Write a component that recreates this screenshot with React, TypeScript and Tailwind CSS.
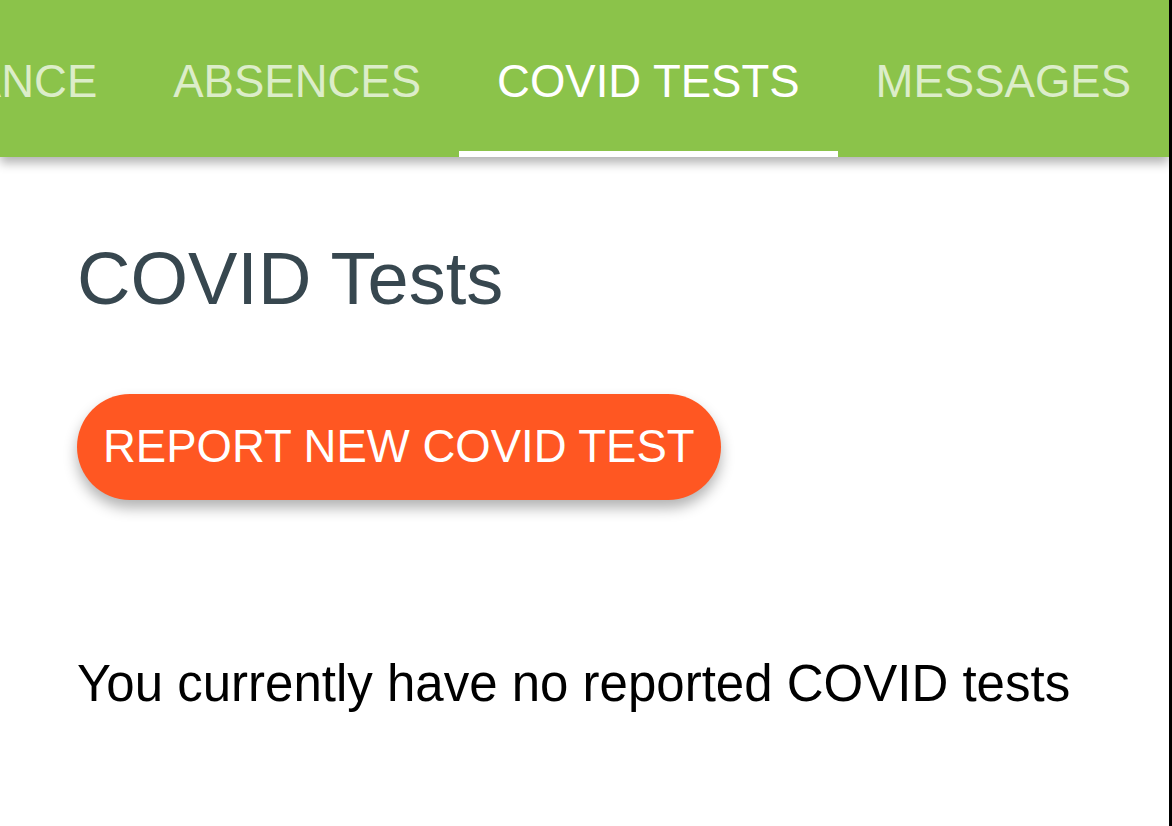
const tabs = [
  { label: "ATTENDANCE", active: false },
  { label: "ABSENCES", active: false },
  { label: "COVID TESTS", active: true },
  { label: "MESSAGES", active: false },
];

export default function App() {
  return (
    <div className="h-screen w-full bg-white border-r-[3px] border-black overflow-hidden font-['Liberation_Sans',Arial,sans-serif]">
      {/* Tab bar */}
      <div className="relative z-10 h-[157px] bg-[#8bc34a] shadow-[0_6px_10px_rgba(0,0,0,0.3)] flex justify-end overflow-hidden">
        {tabs.map((tab) => (
          <div
            key={tab.label}
            className={`relative shrink-0 h-full flex items-center pt-[6px] px-[38px] text-[45.5px] leading-none whitespace-nowrap ${
              tab.active ? "text-white" : "text-[#dcedc9]"
            }`}
          >
            {tab.label}
            {tab.active && (
              <span className="absolute left-0 right-0 bottom-0 h-[6px] bg-white" />
            )}
          </div>
        ))}
      </div>

      {/* Content */}
      <div className="pl-[77px] flex flex-col items-start">
        <h1 className="mt-[85px] text-[74px] leading-none text-[#37474f]">
          COVID Tests
        </h1>

        <button
          type="button"
          className="mt-[78px] h-[106px] px-[26px] rounded-full bg-[#ff5722] text-white text-[45.5px] leading-none whitespace-nowrap shadow-[0_8px_14px_rgba(0,0,0,0.3)]"
        >
          REPORT NEW COVID TEST
        </button>

        <p className="mt-[158px] text-[51px] leading-none text-black whitespace-nowrap">
          You currently have no reported COVID tests
        </p>
      </div>
    </div>
  );
}
